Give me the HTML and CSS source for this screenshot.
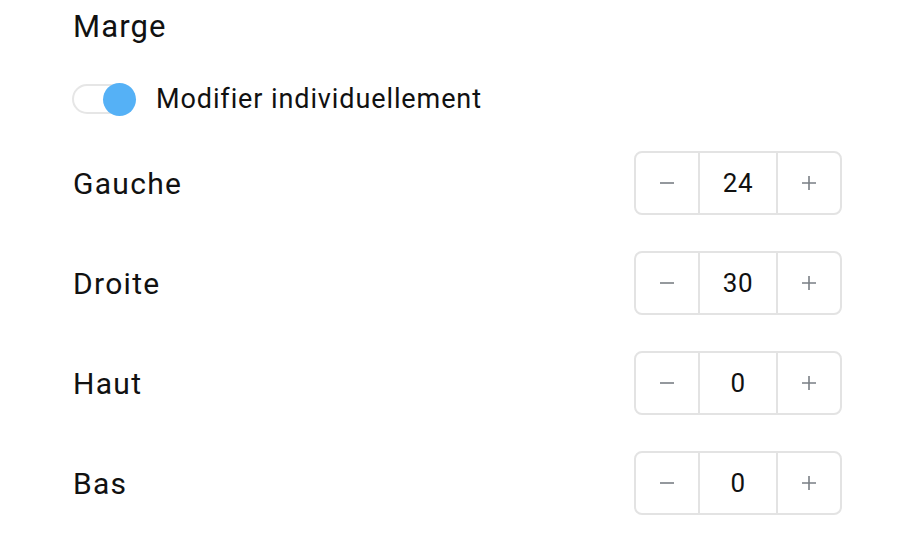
FILE: index.html
```html
<!DOCTYPE html>
<html lang="fr">
<head>
  <meta charset="UTF-8">
  <title>Marge</title>
  <link rel="stylesheet" href="styles.css">
</head>
<body>

<div class="panel">
  <h2 class="titre">Marge</h2>

  <label class="switch-row">
    <span class="switch on"><span class="knob"></span></span>
    <span class="switch-label">Modifier individuellement</span>
  </label>

  <div class="row">
    <span class="label">Gauche</span>
    <div class="stepper">
      <button class="step"><svg viewBox="0 0 16 16"><path d="M1 8h14"/></svg></button>
      <span class="value">24</span>
      <button class="step"><svg viewBox="0 0 16 16"><path d="M1 8h14M8 1v14"/></svg></button>
    </div>
  </div>

  <div class="row">
    <span class="label">Droite</span>
    <div class="stepper">
      <button class="step"><svg viewBox="0 0 16 16"><path d="M1 8h14"/></svg></button>
      <span class="value">30</span>
      <button class="step"><svg viewBox="0 0 16 16"><path d="M1 8h14M8 1v14"/></svg></button>
    </div>
  </div>

  <div class="row">
    <span class="label">Haut</span>
    <div class="stepper">
      <button class="step"><svg viewBox="0 0 16 16"><path d="M1 8h14"/></svg></button>
      <span class="value">0</span>
      <button class="step"><svg viewBox="0 0 16 16"><path d="M1 8h14M8 1v14"/></svg></button>
    </div>
  </div>

  <div class="row">
    <span class="label">Bas</span>
    <div class="stepper">
      <button class="step"><svg viewBox="0 0 16 16"><path d="M1 8h14"/></svg></button>
      <span class="value">0</span>
      <button class="step"><svg viewBox="0 0 16 16"><path d="M1 8h14M8 1v14"/></svg></button>
    </div>
  </div>
</div>

</body>
</html>
```

FILE: styles.css
```css
body {
  margin: 0;
  background: #fff;
  color: #111;
  font-family: Roboto, "Noto Sans", sans-serif;
}
.panel {
  width: 769px;
  padding: 8px 0 0 73px;
}
.titre {
  margin: 0;
  font-size: 31px;
  font-weight: 400;
  line-height: 38px;
  letter-spacing: 1.1px;
}
.switch-row {
  display: flex;
  align-items: center;
  gap: 21px;
  margin-top: 36px;
  height: 34px;
}
.switch {
  position: relative;
  width: 63px;
  height: 30px;
  margin-left: -1px;
  box-sizing: border-box;
  border: 2px solid #e6e6e6;
  border-radius: 15px;
  background: #fff;
}
.switch .knob {
  position: absolute;
  top: -3px;
  right: -3px;
  width: 33px;
  height: 33px;
  border-radius: 50%;
  background: #55b1f6;
}
.switch-label {
  font-size: 27px;
  letter-spacing: 0.9px;
}
.row {
  display: flex;
  align-items: center;
  justify-content: space-between;
  height: 64px;
  margin-top: 35px;
}
.row + .row {
  margin-top: 36px;
}
.label {
  font-size: 30px;
  letter-spacing: 1.3px;
}
.stepper {
  display: flex;
  height: 64px;
  box-sizing: border-box;
  border: 2px solid #e3e3e3;
  border-radius: 8px;
}
.step {
  width: 62px;
  display: flex;
  align-items: center;
  justify-content: center;
  border: none;
  background: none;
  padding: 0;
  cursor: pointer;
}
.step svg {
  width: 16px;
  height: 16px;
  fill: none;
  stroke: #7a7f85;
  stroke-width: 1.6;
}
.value {
  width: 76px;
  display: flex;
  align-items: center;
  justify-content: center;
  border-left: 2px solid #e3e3e3;
  border-right: 2px solid #e3e3e3;
  font-size: 26px;
  letter-spacing: 0.6px;
}
```
